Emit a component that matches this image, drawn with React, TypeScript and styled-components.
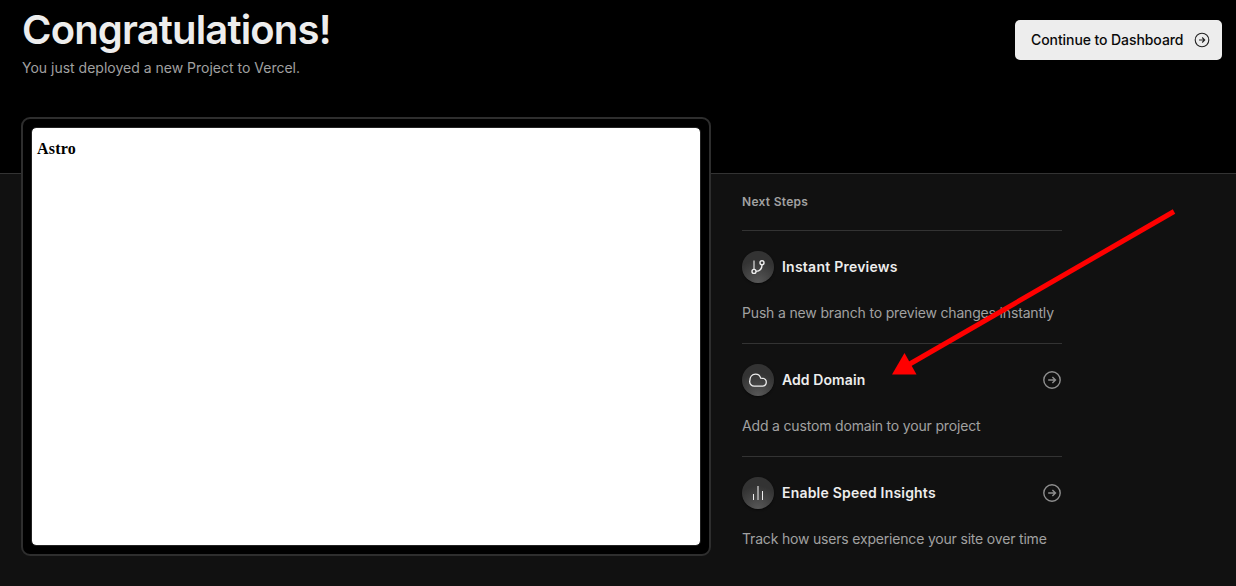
import React from "react";
import styled, { createGlobalStyle } from "styled-components";

const Global = createGlobalStyle`
  * { box-sizing: border-box; }
  body { margin: 0; background: #000; }
  h1, h2, h3, p { margin: 0; }
`;

const Page = styled.div`
  width: 1236px;
  height: 586px;
  position: relative;
  overflow: hidden;
  display: flex;
  flex-direction: column;
  background: #000;
  color: #ededed;
  font-family: Inter, "Liberation Sans", sans-serif;
`;

const Header = styled.header`
  height: 117px;
  flex: none;
  display: flex;
  justify-content: space-between;
  align-items: flex-start;
  padding: 6px 14px 0 22px;
`;

const Title = styled.h1`
  font-size: 40px;
  line-height: 48px;
  font-weight: 600;
  letter-spacing: -0.84px;
  white-space: nowrap;
`;

const Subtitle = styled.p`
  margin-top: 4px;
  font-size: 14px;
  line-height: 20px;
  letter-spacing: 0;
  color: #a1a1a1;
  white-space: nowrap;
`;

const DashboardButton = styled.button`
  margin-top: 14px;
  width: 207px;
  height: 40px;
  padding: 0 12px 0 16px;
  display: flex;
  align-items: center;
  justify-content: space-between;
  border: 0;
  border-radius: 5px;
  background: #ededed;
  color: #0a0a0a;
  font-family: inherit;
  font-size: 14px;
  line-height: 20px;
  font-weight: 500;
  letter-spacing: -0.08px;
  white-space: nowrap;
`;

const ButtonLabel = styled.span`
  padding-bottom: 1px;
`;

const Body = styled.main`
  flex: 1;
  display: flex;
  gap: 31px;
  padding-left: 21px;
  background: linear-gradient(#000 56px, #333 56px, #333 57px, #111 57px);
`;

const PreviewFrame = styled.section`
  width: 690px;
  height: 439px;
  padding: 8px;
  border: 2px solid #2e2e2e;
  border-radius: 9px;
  background: #000;
`;

const Preview = styled.div`
  height: 100%;
  padding: 11px 4px 0 5px;
  border: 1px solid #222;
  border-radius: 5px;
  background: #fff;
  background-clip: padding-box;
`;

const PreviewTitle = styled.h2`
  font: 700 16px/20px "Liberation Serif", serif;
  letter-spacing: 0.2px;
  color: #000;
`;

const Steps = styled.aside`
  width: 320px;
  padding-top: 75px;
`;

const StepsTitle = styled.h2`
  height: 38px;
  font-size: 12px;
  line-height: 20px;
  font-weight: 600;
  letter-spacing: 0.29px;
  color: #a1a1a1;
`;

const Step = styled.article`
  height: 113px;
  padding-top: 20px;
  border-top: 1px solid #333;
`;

const StepHead = styled.div`
  height: 32px;
  display: flex;
  align-items: center;
  gap: 8px;
  padding-right: 1px;
`;

const IconDisc = styled.span`
  width: 32px;
  height: 32px;
  display: grid;
  place-items: center;
  border-radius: 50%;
  background: radial-gradient(circle at 50% 100%, #585858 0%, #333 65%);
  box-shadow: 0 1px 2px #0008;
`;

const StepTitle = styled.h3<{ $tracking: number }>`
  flex: 1;
  font-size: 14px;
  line-height: 20px;
  font-weight: 600;
  letter-spacing: ${(p) => p.$tracking}px;
`;

const StepText = styled.p<{ $tracking: number }>`
  margin-top: 20px;
  font-size: 14px;
  line-height: 20px;
  letter-spacing: ${(p) => p.$tracking}px;
  color: #a1a1a1;
  white-space: nowrap;
`;

const Pointer = styled.svg`
  position: absolute;
  left: 880px;
  top: 200px;
  pointer-events: none;
`;

const ArrowCircle = ({ size, color }: { size: number; color: string }) => (
  <svg width={size} height={size} viewBox="0 0 18 18" fill="none" stroke={color} strokeWidth="1.4">
    <circle cx="9" cy="9" r="8.2" />
    <path d="M5.2 9h7M9.4 5.9 12.5 9l-3.1 3.1" />
  </svg>
);

const SmallArrowCircle = () => (
  <svg width="16" height="16" viewBox="0 0 16 16" fill="none" stroke="#222" strokeWidth="1.1">
    <circle cx="8" cy="8" r="6.8" />
    <path d="M5 8h5.6M8.2 5.5 10.7 8l-2.5 2.5" />
  </svg>
);

const BranchIcon = () => (
  <svg width="16" height="16" viewBox="0 0 16 16" fill="none" strokeWidth="1.4">
    <path d="M4 1.5v8.8" stroke="#b5b5b5" strokeWidth="1.6" />
    <g stroke="#ededed">
      <path d="M12 5.7v.3c0 3.7-2.2 6.1-6 6.4" />
      <circle cx="4" cy="12.4" r="2" />
      <circle cx="12" cy="3.7" r="2" />
    </g>
  </svg>
);

const CloudIcon = () => (
  <svg width="20" height="16" viewBox="0 0 20 16" fill="none" stroke="#ededed" strokeWidth="1.3">
    <path d="M6.2 14.2a4.6 4.6 0 0 1-4.5-4.8c0-4.2 2.3-7.2 5.8-7.2 2.6 0 4.4 1.3 5.2 3.9 3.2 0 5.6 1.4 5.6 4 0 2.5-1.6 4.1-4.1 4.1z" />
  </svg>
);

const BarsIcon = () => (
  <svg width="16" height="16" viewBox="0 0 16 16">
    <path d="M3 9h1v6H3zM12 6h1v9h-1z" fill="#ededed" />
    <path d="M7 1h2v14H7z" fill="#999" />
  </svg>
);

const steps = [
  {
    title: "Instant Previews",
    text: "Push a new branch to preview changes instantly",
    icon: <BranchIcon />,
    link: false,
    titleTracking: 0.24,
    textTracking: -0.165,
  },
  {
    title: "Add Domain",
    text: "Add a custom domain to your project",
    icon: <CloudIcon />,
    link: true,
    titleTracking: 0.08,
    textTracking: -0.17,
  },
  {
    title: "Enable Speed Insights",
    text: "Track how users experience your site over time",
    icon: <BarsIcon />,
    link: true,
    titleTracking: 0.2,
    textTracking: -0.185,
  },
];

export default function App() {
  return (
    <Page>
      <Global />
      <Header>
        <div>
          <Title>Congratulations!</Title>
          <Subtitle>You just deployed a new Project to Vercel.</Subtitle>
        </div>
        <DashboardButton>
          <ButtonLabel>Continue to Dashboard</ButtonLabel>
          <SmallArrowCircle />
        </DashboardButton>
      </Header>
      <Body>
        <PreviewFrame>
          <Preview>
            <PreviewTitle>Astro</PreviewTitle>
          </Preview>
        </PreviewFrame>
        <Steps>
          <StepsTitle>Next Steps</StepsTitle>
          {steps.map((s) => (
            <Step key={s.title}>
              <StepHead>
                <IconDisc>{s.icon}</IconDisc>
                <StepTitle $tracking={s.titleTracking}>{s.title}</StepTitle>
                {s.link && <ArrowCircle size={18} color="#8f8f8f" />}
              </StepHead>
              <StepText $tracking={s.textTracking}>{s.text}</StepText>
            </Step>
          ))}
        </Steps>
      </Body>
      <Pointer width="310" height="190">
        <path d="M294 11.5 28 165" stroke="#f00" strokeWidth="5" />
        <path d="M12 174.5 24.5 153 36.5 174.5z" fill="#f00" />
      </Pointer>
    </Page>
  );
}
